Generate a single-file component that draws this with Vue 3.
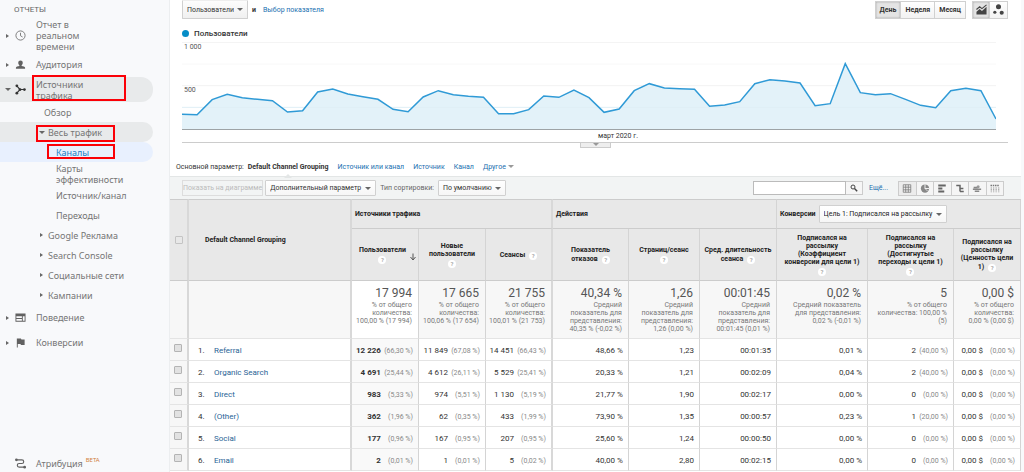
<script setup>
import { ref } from 'vue'

const users = [
  343, 344, 299, 283, 293, 298, 302, 336, 332, 276, 267, 282, 290, 298, 328, 335, 291, 272, 284, 289, 292,
  341, 341, 329, 288, 292, 270, 293, 337, 327, 272, 251, 264, 266, 268, 319, 315, 305, 251, 239, 243, 249,
  317, 311, 191, 278, 284, 281, 298, 316, 323, 272, 265, 272, 357,
]
const linePoints = users.map((v, i) => `${i * 15},${v - 126}`).join(' ')
const areaPoints = `0,261 ${linePoints} 810,261`

const period = ref('День')
const periods = ['День', 'Неделя', 'Месяц']
const tabs = ['Источник или канал', 'Источник', 'Канал']
const views = ['Таблица', 'Доля', 'Эффективность', 'Сравнение', 'Облако', 'Сводка']

const columns = [
  { lines: ['Пользователи'], below: true, sorted: true },
  { lines: ['Новые', 'пользователи'], below: true },
  { lines: ['Сеансы'], end: true },
  { lines: ['Показатель', 'отказов'] },
  { lines: ['Страниц/сеанс'], below: true },
  { lines: ['Сред. длительность', 'сеанса'] },
  { lines: ['Подписался на', 'рассылку', '(Коэффициент', 'конверсии для цели 1)'], below: true },
  { lines: ['Подписался на', 'рассылку', '(Достигнутые', 'переходы к цели 1)'], below: true },
  { lines: ['Подписался на', 'рассылку', '(Ценность цели', '1)'] },
]
const totals = [
  ['17 994', '% от общего', 'количества:', '100,00 % (17 994)'],
  ['17 665', '% от общего', 'количества:', '100,06 % (17 654)'],
  ['21 755', '% от общего', 'количества:', '100,01 % (21 753)'],
  ['40,34 %', 'Средний', 'показатель для', 'представления:', '40,35 % (-0,02 %)'],
  ['1,26', 'Средний', 'показатель для', 'представления:', '1,26 (0,00 %)'],
  ['00:01:45', 'Средний', 'показатель для', 'представления:', '00:01:45 (0,01 %)'],
  ['0,02 %', 'Средний показатель', 'для представления:', '0,02 % (-0,01 %)'],
  ['5', '% от общего', 'количества: 100,00 %', '(5)'],
  ['0,00 $', '% от общего', 'количества:', '0,00 % (0,00 $)'],
]
const rows = [
  ['Referral', ['12 226', '66,30'], ['11 849', '67,08'], ['14 451', '66,43'], ['48,66 %'], ['1,23'], ['00:01:35'], ['0,01 %'], ['2', '40,00'], ['0,00 $', '0,00']],
  ['Organic Search', ['4 691', '25,44'], ['4 612', '26,11'], ['5 529', '25,41'], ['20,33 %'], ['1,21'], ['00:02:09'], ['0,04 %'], ['2', '40,00'], ['0,00 $', '0,00']],
  ['Direct', ['983', '5,33'], ['974', '5,51'], ['1 130', '5,19'], ['21,77 %'], ['1,90'], ['00:02:17'], ['0,00 %'], ['0', '0,00'], ['0,00 $', '0,00']],
  ['(Other)', ['362', '1,96'], ['62', '0,35'], ['433', '1,99'], ['73,90 %'], ['1,35'], ['00:00:57'], ['0,23 %'], ['1', '20,00'], ['0,00 $', '0,00']],
  ['Social', ['177', '0,96'], ['167', '0,95'], ['207', '0,95'], ['25,60 %'], ['1,24'], ['00:00:50'], ['0,00 %'], ['0', '0,00'], ['0,00 $', '0,00']],
  ['Email', ['2', '0,01'], ['1', '0,01'], ['5', '0,02'], ['40,00 %'], ['2,80'], ['00:02:15'], ['0,00 %'], ['0', '0,00'], ['0,00 $', '0,00']],
]
</script>

<template>
  <div class="page">
    <nav class="side" aria-label="Отчеты">
      <div class="side-title">ОТЧЕТЫ</div>
      <a href="#" class="item tall">
        <i class="tri"></i>
        <svg class="ico" viewBox="0 0 24 24"><circle cx="12" cy="12" r="10" fill="none" stroke="#757575" stroke-width="2" /><path d="M12 6v6.5l4.500 2.800" fill="none" stroke="#757575" stroke-width="2" /></svg>
        <span>Отчет в<br>реальном<br>времени</span>
      </a>
      <a href="#" class="item">
        <i class="tri"></i>
        <svg class="ico" viewBox="0 0 24 24"><path fill="#616161" d="M12 3a5 5 0 0 1 5 5c0 2.500-1.200 4.500-2.500 5.500v1.500c3 .5 7.500 1.500 7.500 4v2H2v-2c0-2.500 4.500-3.500 7.500-4v-1.500C8.200 12.500 7 10.500 7 8a5 5 0 0 1 5-5z" /></svg>
        <span>Аудитория</span>
      </a>
      <a href="#" class="item open">
        <i class="tri down"></i>
        <svg class="ico" viewBox="0 0 24 24"><path d="M4 4l7 8-7 8M11 12h9" fill="none" stroke="#333" stroke-width="2.500" /><g fill="#333"><circle cx="4" cy="4" r="3" /><circle cx="4" cy="20" r="3" /><circle cx="11" cy="12" r="3" /><circle cx="20.500" cy="12" r="3" /></g></svg>
        <span>Источники<br>трафика</span>
        <b class="mark mark-source"></b>
      </a>
      <a href="#" class="sub plain">Обзор</a>
      <a href="#" class="sub open"><i class="tri down"></i>Весь трафик<b class="mark mark-all"></b></a>
      <a href="#" class="sub leaf current">Каналы<b class="mark mark-channel"></b></a>
      <a href="#" class="sub leaf two">Карты<br>эффективности</a>
      <a href="#" class="sub leaf">Источник/канал</a>
      <a href="#" class="sub leaf">Переходы</a>
      <a href="#" class="sub"><i class="tri"></i>Google Реклама</a>
      <a href="#" class="sub"><i class="tri"></i>Search Console</a>
      <a href="#" class="sub"><i class="tri"></i>Социальные сети</a>
      <a href="#" class="sub"><i class="tri"></i>Кампании</a>
      <a href="#" class="item">
        <i class="tri"></i>
        <svg class="ico" viewBox="0 0 24 24"><path fill="#616161" fill-rule="evenodd" d="M1 3h22v18H1zM3 9v4h12V9zM3 15v4h12v-4zM17 9v10h4V9z" /></svg>
        <span>Поведение</span>
      </a>
      <a href="#" class="item">
        <i class="tri"></i>
        <svg class="ico" viewBox="0 0 24 24"><path fill="#616161" d="M4 3h9l1 2.500h7v12h-8L12 15H6v8H4z" /></svg>
        <span>Конверсии</span>
      </a>
      <a href="#" class="item last">
        <i class="tri none"></i>
        <svg class="ico" viewBox="0 0 24 24"><path d="M3 4h12a4 4 0 0 1 0 8H9a4 4 0 0 0 0 8h12" fill="none" stroke="#616161" stroke-width="2.500" /><circle cx="3" cy="4" r="3" fill="#616161" /><circle cx="21" cy="20" r="3" fill="#616161" /></svg>
        <span>Атрибуция</span><sup>BETA</sup>
      </a>
    </nav>

    <main class="main">
      <div class="top">
        <label class="pick metric"><select aria-label="Показатель"><option>Пользователи</option></select><i class="tri down"></i></label>
        <b class="and">и</b>
        <a href="#">Выбор показателя</a>
        <div class="periods">
          <button v-for="p in periods" :key="p" type="button" :class="{ on: period === p }" @click="period = p">{{ p }}</button>
        </div>
        <div class="kinds">
          <button type="button" class="on" aria-label="График"><svg viewBox="0 0 24 24"><path fill="#444" d="M1 23v-6l7-6 5 4 10-9v17z" /><path d="M1 12l7-6 5 4 10-8" fill="none" stroke="#444" stroke-width="2.500" /></svg></button>
          <button type="button" aria-label="Диаграмма движения"><svg viewBox="0 0 24 24"><g fill="#444"><circle cx="12" cy="6" r="5.500" /><circle cx="4" cy="18" r="3.500" /><circle cx="19" cy="19" r="4.500" /></g></svg></button>
        </div>
      </div>

      <div class="legend"><i></i>Пользователи</div>
      <div class="chart">
        <svg viewBox="0 0 810 261" preserveAspectRatio="none" role="img" aria-label="Пользователи по дням">
          <path d="M0 1H810M0 131H810" />
          <path class="minor" d="M0 66H810" />
          <polygon :points="areaPoints" fill="#e3f2f9" />
          <path class="faint" d="M0 196H810" />
          <polyline :points="linePoints" />
        </svg>
        <div class="scale"><span>1 000</span><span>500</span></div>
      </div>
      <div class="month">март 2020 г.</div>
      <button class="handle" type="button" aria-label="Свернуть"><i class="tri down"></i></button>

      <div class="params">
        <span>Основной параметр:</span>
        <b>Default Channel Grouping</b>
        <a v-for="t in tabs" :key="t" href="#">{{ t }}</a>
        <a href="#" class="other">Другое<i class="tri down"></i></a>
      </div>

      <div class="tools">
        <button class="plot" type="button" disabled>Показать на диаграмме</button>
        <label class="pick second"><select aria-label="Дополнительный параметр"><option>Дополнительный параметр</option></select><i class="tri down"></i></label>
        <label class="sort-label" for="sort">Тип сортировки:</label>
        <span class="pick sort"><select id="sort"><option>По умолчанию</option></select><i class="tri down"></i></span>
        <form class="search" @submit.prevent>
          <input type="text" aria-label="Поиск">
          <button type="submit" aria-label="Найти"><svg viewBox="0 0 24 24"><circle cx="9" cy="9" r="6" fill="none" stroke="#444" stroke-width="3" /><path d="M13.500 13.500l8 8" stroke="#444" stroke-width="4.500" /></svg></button>
        </form>
        <a href="#" class="more">Ещё...</a>
        <div class="views">
          <button v-for="(v, i) in views" :key="v" type="button" :aria-label="v" :class="{ on: i === 0 }">
            <svg viewBox="0 0 24 24" fill="none" stroke="#777" stroke-width="2">
              <path v-if="i === 0" d="M2 2h20v20H2zM2 8.500h20M2 15.500h20M8.500 2v20M15.500 2v20" />
              <g v-else-if="i === 1"><circle cx="12" cy="12" r="11" fill="#888" stroke="none" /><path d="M12 1v11h11" stroke="#f5f5f5" stroke-width="2.500" /><path d="M12 12l7 7" stroke="#f5f5f5" /></g>
              <path v-else-if="i === 2" d="M2 4h20M2 12h11M2 20h16" stroke="#666" stroke-width="5" />
              <path v-else-if="i === 3" d="M2 4h10v8M10 12h11M12 12v8M12 20h10" stroke="#666" stroke-width="4" />
              <g v-else-if="i === 4"><path d="M3 9h11M1 14h22M6 19h12" stroke="#888" stroke-width="4" /><circle cx="15" cy="7" r="4" fill="#999" stroke="none" /></g>
              <g v-else><path d="M0 4h24" stroke-width="4" stroke-dasharray="4 2" /><path d="M2 9v13M8.500 9v13M15 9v13M22 9v13" stroke-dasharray="3 1" /></g>
            </svg>
          </button>
        </div>
      </div>

      <table>
        <colgroup>
          <col class="c-check"><col><col class="c-67"><col class="c-67"><col class="c-67"><col class="c-76"><col class="c-71"><col class="c-77"><col class="c-91"><col class="c-86"><col class="c-67">
        </colgroup>
        <thead>
          <tr class="groups">
            <th rowspan="2" class="check edge"><input type="checkbox" aria-label="Выбрать все"></th>
            <th rowspan="2" class="name edge">Default Channel Grouping</th>
            <th colspan="3" class="edge">Источники трафика</th>
            <th colspan="3">Действия</th>
            <th colspan="3">
              <label class="goal">Конверсии
                <span class="pick"><select><option>Цель 1: Подписался на рассылку</option></select><i class="tri down"></i></span>
              </label>
            </th>
          </tr>
          <tr class="heads">
            <th v-for="(c, i) in columns" :key="i" :class="{ edge: i === 2, sorted: c.sorted }">
              <div class="head">
                <span v-for="(l, k) in c.lines" :key="l">{{ l }}<i v-if="!c.below && k === c.lines.length - 1" class="help">?</i></span>
                <span v-if="c.below"><i class="help alone">?</i></span>
                <svg v-if="c.sorted" class="arrow" viewBox="0 0 12 16"><path d="M6 1v12M1 8l5 6 5-6" fill="none" stroke="#555" stroke-width="2" /></svg>
              </div>
            </th>
          </tr>
        </thead>
        <tbody>
          <tr class="totals">
            <td class="edge"></td>
            <td class="edge"></td>
            <td v-for="(t, i) in totals" :key="i" :class="{ edge: i === 2, white: i === 0 }">
              <strong>{{ t[0] }}</strong>
              <span v-for="l in t.slice(1)" :key="l">{{ l }}</span>
            </td>
          </tr>
          <tr v-for="(r, n) in rows" :key="r[0]" class="row">
            <td class="check edge"><input type="checkbox" :aria-label="r[0]"></td>
            <td class="name edge"><span>{{ n + 1 }}.</span><a href="#">{{ r[0] }}</a></td>
            <td v-for="(c, i) in r.slice(1)" :key="i" class="num" :class="{ edge: i === 2, first: i === 0 }">{{ c[0] }}<small v-if="c[1]">({{ c[1] }} %)</small></td>
          </tr>
        </tbody>
      </table>
    </main>
  </div>
</template>

<style>
body {
  margin: 0;
  background: #f8f9fb;
}
</style>

<style scoped>
* {
  box-sizing: border-box;
}
.page {
  display: flex;
  min-height: 100vh;
  padding-right: 3px;
  font: 7px/8px Roboto, "Liberation Sans", sans-serif;
  color: #333;
}
a {
  color: #1a6fb0;
  text-decoration: none;
}
button, select, input {
  font: inherit;
  color: inherit;
  margin: 0;
}
.tri {
  flex: none;
  width: 0;
  height: 0;
  border: 2px solid transparent;
  border-left: 3px solid #666;
  border-right: 0;
}
.tri.down {
  border: 3px solid transparent;
  border-top: 3px solid #666;
  border-bottom: 0;
}
.tri.none {
  visibility: hidden;
}

/* navigation */
.side {
  display: flex;
  flex-direction: column;
  flex: none;
  width: 170px;
  font: 9px/11px "Noto Sans", Roboto, sans-serif;
  background: #f8f9fb;
  border-right: 1px solid #eceef0;
}
.side a {
  color: #757575;
}
.side-title {
  height: 19px;
  padding: 4px 0 0 14px;
  font: 8px/11px Roboto, sans-serif;
  color: #666;
}
.item, .sub {
  position: relative;
  display: flex;
  align-items: center;
  margin-right: 16px;
  border-radius: 0 12px 12px 0;
}
.item {
  height: 25px;
  padding-left: 6px;
}
.item.tall {
  height: 33px;
}
.item > .tri {
  margin-right: 6px;
}
.item > .tri.down {
  margin: 0 4px 0 -1px;
}
.ico {
  width: 11px;
  height: 11px;
  margin-right: 10px;
}
.sub {
  height: 20px;
  padding-left: 40px;
}
.sub > .tri {
  margin-right: 5px;
}
.sub > .tri.down {
  margin: 0 3px 0 -1px;
}
.sub.plain {
  padding-left: 44px;
}
.sub.leaf {
  padding-left: 56px;
}
.sub.two {
  height: 23px;
}
.open {
  background: #e8eaeb;
}
.side .current {
  color: #1a7fc4;
  background: #e8f0fe;
}
.item.last {
  height: 18px;
  margin-top: auto;
}
.last sup {
  align-self: flex-start;
  margin: 3px 0 0 3px;
  font: 6px/6px "Noto Sans", sans-serif;
  color: #d08040;
}
.mark {
  position: absolute;
  border: 2px solid #fb0007;
}
.mark-source {
  left: 32px;
  top: -2px;
  width: 94px;
  height: 26px;
}
.mark-all {
  left: 36px;
  top: 3px;
  width: 79px;
  height: 17px;
}
.mark-channel {
  left: 47px;
  top: 2px;
  width: 68px;
  height: 15px;
}

/* report */
.main {
  flex: 1;
  min-width: 0;
  background: #fff;
}
.pick {
  display: inline-grid;
  align-items: center;
  background: linear-gradient(#fff, #f6f6f6);
  border: 1px solid #d0d0d0;
  border-radius: 1px;
}
.pick select, .pick .tri {
  grid-area: 1 / 1;
}
.pick .tri {
  justify-self: end;
  margin-right: 4px;
  pointer-events: none;
}
.pick select {
  appearance: none;
  height: 14px;
  padding: 0 13px 0 4px;
  background: none;
  border: 0;
}
.top {
  display: flex;
  align-items: center;
  height: 19px;
  padding: 0 13px 0 12px;
}
.top .pick {
  height: 19px;
  background: linear-gradient(#fdfdfd, #f0f0f0);
  border-top-color: #eee;
}
.top .and {
  margin: 0 7px 0 4px;
}
.periods, .kinds, .views {
  display: flex;
}
.periods {
  margin-left: auto;
}
.kinds {
  margin-left: 6px;
}
.periods button, .kinds button {
  height: 18px;
  padding: 0 4px;
  font-weight: 700;
  background: linear-gradient(#fff, #f2f2f2);
  border: 1px solid #d0d0d0;
  border-left-width: 0;
}
.periods button:first-child, .kinds button:first-child {
  border-left-width: 1px;
}
.kinds button {
  width: 18px;
  padding: 0 3px;
}
.kinds svg {
  display: block;
  width: 11px;
  height: 11px;
}
.periods .on, .kinds .on {
  background: #e4e4e4;
  box-shadow: inset 0 0 2px #999;
}
.legend {
  display: flex;
  align-items: center;
  height: 23px;
  padding: 6px 0 0 12px;
  font-size: 8px;
  font-weight: 500;
}
.legend i {
  width: 7px;
  height: 7px;
  margin-right: 5px;
  background: #058dc7;
  border-radius: 50%;
}
.chart {
  display: grid;
  height: 88px;
  margin: 0 25px 0 12px;
  border-bottom: 1px solid #9da3a6;
}
.chart svg, .scale {
  grid-area: 1 / 1;
  width: 100%;
  height: 87px;
}
.chart path {
  fill: none;
  stroke: #f2f2f2;
  vector-effect: non-scaling-stroke;
}
.chart .minor {
  stroke: #f8f8f8;
}
.chart .faint {
  stroke: #dfeff6;
}
.chart polyline {
  fill: none;
  stroke: #2f9ad6;
  stroke-width: 1.5px;
  vector-effect: non-scaling-stroke;
}
.scale {
  display: grid;
  grid-template-rows: 1fr 1fr;
  padding: 1px 0 0 2px;
  color: #555;
}
.month {
  height: 13px;
  margin: 0 13px 0 12px;
  padding-left: 46px;
  line-height: 13px;
  text-align: center;
  border-bottom: 1px solid #ccc;
}
.handle {
  display: flex;
  justify-content: center;
  width: 31px;
  height: 5px;
  margin: 0 auto;
  padding: 0;
  background: #eee;
  border: 1px solid #ccc;
  border-top: 0;
}
.handle .tri {
  border-top-color: #999;
}
.params {
  display: flex;
  align-items: center;
  height: 28px;
  padding: 9px 0 0 6px;
  gap: 9px;
}
.params span {
  margin-right: -5px;
}
.params b {
  position: relative;
  font-weight: 700;
}
.params b::after {
  content: "";
  position: absolute;
  left: 50%;
  top: 11px;
  border: 4px solid transparent;
  border-top: 0;
  border-bottom-color: #e3e6e6;
  transform: translateX(-50%);
}
.other {
  display: flex;
  align-items: center;
  gap: 2px;
}
.other .tri {
  border-top-color: #999;
}
.tools {
  display: flex;
  align-items: center;
  height: 23px;
  padding: 0 17px 0 12px;
  background: #f2f4f4;
  border-top: 1px solid #e3e6e6;
}
.plot {
  height: 16px;
  padding: 0;
  margin-right: -1px;
  color: #bbb;
  background: #f2f4f4;
  border: 1px solid #ddd;
}
.second {
  margin-left: 3px;
}
.sort-label {
  margin: 0 4px;
  color: #666;
}
.search {
  display: flex;
  width: 110px;
  height: 14px;
  margin-left: auto;
}
.search input {
  flex: 1;
  min-width: 0;
  padding: 0 3px;
  background: #fff;
  border: 1px solid #bbb;
}
.search button {
  width: 17px;
  padding: 0 4px;
  background: #f6f6f6;
  border: 1px solid #ccc;
  border-left: 0;
}
.search svg {
  display: block;
  width: 8px;
  height: 8px;
}
.more {
  margin: 0 10px 0 6px;
}
.views {
  width: 106px;
}
.views button {
  flex: 1;
  height: 15px;
  padding: 0 3px;
  background: #f5f5f5;
  border: 1px solid #ccc;
  border-left-width: 0;
}
.views button:first-child {
  border-left-width: 1px;
}
.views svg {
  display: block;
  width: 10px;
  height: 9px;
  margin: 0 auto;
}
.views .on {
  background: #ececec;
}

table {
  width: 100%;
  table-layout: fixed;
  border-collapse: separate;
  border-spacing: 0;
}
.c-check { width: 19px; }
.c-67 { width: 67px; }
.c-71 { width: 71px; }
.c-76 { width: 76px; }
.c-77 { width: 77px; }
.c-86 { width: 86px; }
.c-91 { width: 91px; }
th, td {
  padding: 0;
  border-right: 1px solid #d4d4d4;
  border-bottom: 1px solid #e4e4e4;
}
.edge {
  border-right: 2px solid #d8d8d8;
}
th {
  font-weight: 700;
  color: #222;
  background: #e8e8e8;
  border-bottom-color: #ccc;
}
.groups th {
  height: 30px;
  padding-left: 3px;
  text-align: left;
  border-top: 1px solid #ccc;
}
.groups .check {
  padding: 0 0 0 5px;
}
.groups .name {
  padding-left: 16px;
}
.heads th {
  height: 52px;
  padding-top: 2px;
}
.goal {
  display: flex;
  align-items: center;
  gap: 3px;
}
.goal .pick {
  font-weight: 400;
}
.goal select {
  height: 16px;
}
.head {
  position: relative;
  text-align: center;
}
.head span {
  display: block;
}
.sorted .head {
  padding-right: 5px;
}
.help {
  display: inline-block;
  width: 8px;
  height: 8px;
  margin: 2px 0 1px 4px;
  font: 700 6px/8px Roboto, sans-serif;
  color: #aaa;
  text-align: center;
  vertical-align: middle;
  background: #fff;
  border-radius: 50%;
}
.help.alone {
  margin-left: 0;
}
.arrow {
  position: absolute;
  right: 2px;
  top: 7px;
  width: 6px;
  height: 8px;
}
.totals td {
  height: 58px;
  padding: 5px 6px 0 0;
  text-align: right;
  vertical-align: top;
  color: #777;
  background: #f7f7f7;
  white-space: nowrap;
}
.totals .white {
  background: #fff;
}
.totals strong {
  display: block;
  margin-bottom: 1px;
  font-size: 12px;
  font-weight: 400;
  line-height: 14px;
  color: #555;
}
.totals span {
  display: block;
}
.row td {
  height: 22px;
  padding-top: 2px;
  font-size: 8px;
  white-space: nowrap;
}
.row .check {
  padding: 0 0 3px 4px;
  background: #f7f7f7;
}
.check input {
  display: block;
  appearance: none;
  width: 8px;
  height: 8px;
  border: 1px solid #c4c4c4;
  border-radius: 1px;
}
.row .check input {
  background: #e2e2e2;
  border-color: #b4b4b4;
}
.row .name {
  padding-left: 9px;
}
.name span {
  display: inline-block;
  width: 16px;
}
.name a {
  color: #2a6496;
}
.num {
  padding-right: 5px;
  text-align: right;
}
.num small {
  display: inline-block;
  width: 32px;
  font-size: 7px;
  color: #888;
}
.num.first {
  font-weight: 700;
  background: #f9f9f9;
}
.first small {
  font-weight: 400;
}
</style>
